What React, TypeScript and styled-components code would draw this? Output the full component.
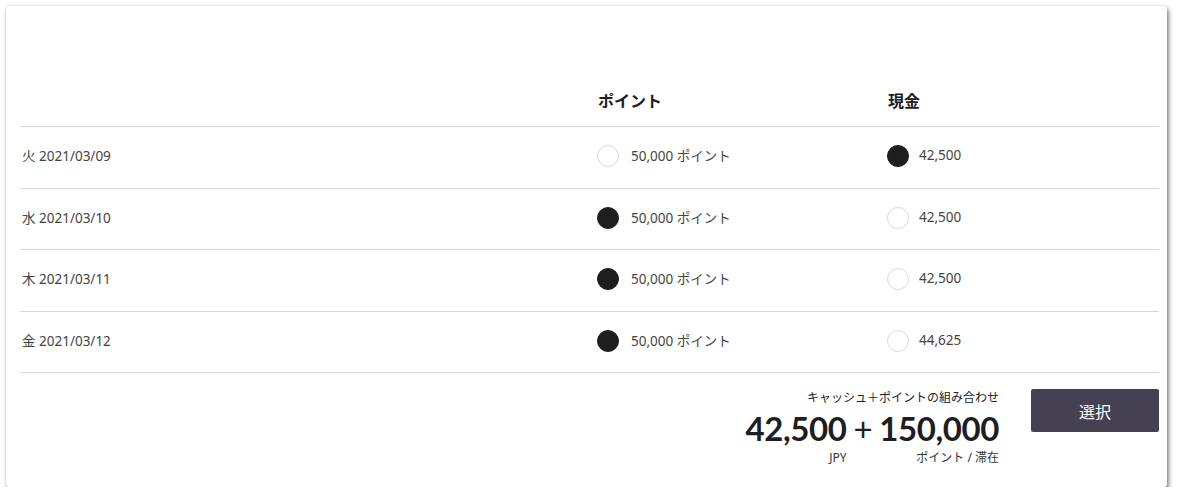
import React from "react";
import styled, { createGlobalStyle } from "styled-components";

const Global = createGlobalStyle`
  html, body { margin: 0; padding: 0; background: #fff; }
  body { font-family: "Noto Sans", "Noto Sans CJK JP", sans-serif; color: #333; }
`;

const Page = styled.div`
  padding: 6px 0 0 6px;
`;

const Card = styled.div`
  box-sizing: border-box;
  width: 1161px;
  height: 481px;
  background: #fff;
  border-radius: 3px;
  box-shadow: 0 0 3px rgba(0, 0, 0, 0.18), 2px 3px 4px rgba(0, 0, 0, 0.45);
  padding: 85px 8px 0 14px;
`;

const Grid = styled.div`
  display: grid;
  grid-template-columns: 577px 290px 1fr;
`;

const HeadCell = styled.div`
  font-size: 16px;
  font-weight: 700;
  line-height: 20px;
  color: #1e1e1e;
  padding: 0 0 15px 1px;
  border-bottom: 1px solid #d6d6d6;
`;

const Cell = styled.div<{ $pad?: number; $gap?: number }>`
  box-sizing: border-box;
  height: 61.5px;
  display: flex;
  align-items: center;
  gap: ${(p) => p.$gap ?? 12}px;
  border-bottom: 1px solid #d6d6d6;
  font-size: 13.5px;
  color: #444;
  padding-left: ${(p) => p.$pad ?? 0}px;
  padding-bottom: 4px;
`;

const Radio = styled.span<{ $on: boolean }>`
  box-sizing: border-box;
  width: 22px;
  height: 22px;
  border-radius: 50%;
  flex: none;
  background: ${(p) => (p.$on ? "#1e1e1e" : "#fff")};
  border: 1px solid ${(p) => (p.$on ? "#1e1e1e" : "#d9d9d9")};
  margin-top: 2px;
`;

const Footer = styled.div`
  display: flex;
  justify-content: flex-end;
  align-items: flex-start;
  gap: 32px;
  padding-top: 16px;
`;

const Summary = styled.div`
  display: flex;
  flex-direction: column;
  align-items: flex-end;
`;

const Caption = styled.div`
  font-size: 12px;
  line-height: 18px;
  color: #222;
`;

const Totals = styled.div`
  display: flex;
  align-items: flex-start;
  gap: 7px;
  margin-top: 4px;
`;

const Part = styled.div`
  display: flex;
  flex-direction: column;
  align-items: flex-end;
`;

const Big = styled.div`
  font-family: Lato, "Noto Sans", sans-serif;
  font-size: 33px;
  font-weight: 700;
  line-height: 34px;
  color: #1e1e1e;
  letter-spacing: -0.4px;
`;

const Plus = styled(Big)`
  font-weight: 400;
`;

const Unit = styled.div`
  font-size: 12px;
  line-height: 14px;
  color: #333;
  margin-top: 6px;
`;

const Button = styled.button`
  width: 128px;
  height: 43px;
  border: none;
  border-radius: 2px;
  background: #454152;
  color: #fff;
  font-family: "Noto Sans CJK JP", sans-serif;
  font-size: 16px;
  cursor: pointer;
`;

const rows = [
  { d: "火 2021/03/09", pts: false, cash: "42,500" },
  { d: "水 2021/03/10", pts: true, cash: "42,500" },
  { d: "木 2021/03/11", pts: true, cash: "42,500" },
  { d: "金 2021/03/12", pts: true, cash: "44,625" },
];

export default function App() {
  return (
    <>
      <Global />
      <Page>
        <Card>
          <Grid>
            <HeadCell />
            <HeadCell>ポイント</HeadCell>
            <HeadCell>現金</HeadCell>
            {rows.map((r) => (
              <React.Fragment key={r.d}>
                <Cell $pad={2}>{r.d}</Cell>
                <Cell>
                  <Radio $on={r.pts} />
                  50,000 ポイント
                </Cell>
                <Cell $gap={10}>
                  <Radio $on={!r.pts} />
                  {r.cash}
                </Cell>
              </React.Fragment>
            ))}
          </Grid>
          <Footer>
            <Summary>
              <Caption>キャッシュ＋ポイントの組み合わせ</Caption>
              <Totals>
                <Part>
                  <Big>42,500</Big>
                  <Unit>JPY</Unit>
                </Part>
                <Plus>+</Plus>
                <Part>
                  <Big>150,000</Big>
                  <Unit>ポイント / 滞在</Unit>
                </Part>
              </Totals>
            </Summary>
            <Button>選択</Button>
          </Footer>
        </Card>
      </Page>
    </>
  );
}
